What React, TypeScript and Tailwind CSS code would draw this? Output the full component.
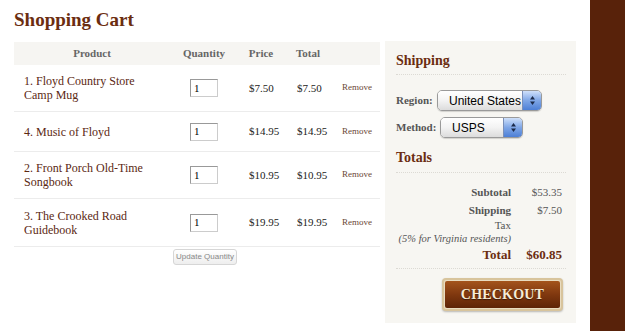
import React from "react";

const serif = { fontFamily: '"Liberation Serif", "Times New Roman", serif' };
const sans = { fontFamily: '"Liberation Sans", Arial, sans-serif' };

type Item = { name: string[]; price: string; h: string };
const items: Item[] = [
  { name: ["1. Floyd Country Store", "Camp Mug"], price: "$7.50", h: "h-[47px]" },
  { name: ["4. Music of Floyd"], price: "$14.95", h: "h-[40px]" },
  { name: ["2. Front Porch Old-Time", "Songbook"], price: "$10.95", h: "h-[47px]" },
  { name: ["3. The Crooked Road", "Guidebook"], price: "$19.95", h: "h-[48px]" },
];

function Arrows() {
  return (
    <svg width="7" height="11" viewBox="0 0 7 11">
      <path d="M3.5 1 L6 4.5 H1 Z" fill="#1b2a4a" />
      <path d="M3.5 10 L6 6.5 H1 Z" fill="#1b2a4a" />
    </svg>
  );
}

function Select({ label, w }: { label: string; w: string }) {
  return (
    <div
      className={`flex h-[21px] ${w} overflow-hidden rounded-[5px] border border-[#9a9a9a] shadow-[0_1px_1px_rgba(0,0,0,0.15)]`}
    >
      <div
        className="flex flex-1 items-center bg-gradient-to-b from-[#ffffff] via-[#f3f3f3] to-[#dcdcdc] pl-[11px] text-[12px] text-black"
        style={sans}
      >
        {label}
      </div>
      <div className="flex w-[19px] items-center justify-center border-l border-[#7a8fb8] bg-gradient-to-b from-[#cfe0fa] via-[#7fa6e6] to-[#4d7fd6]">
        <Arrows />
      </div>
    </div>
  );
}

export default function App() {
  return (
    <div className="flex h-[331px] w-[625px] overflow-hidden bg-white" style={serif}>
      <div className="flex flex-1 flex-col pl-[14px]">
        <h1 className="mt-[9px] h-[32px] shrink-0 text-[19px] font-bold leading-[22px] text-[#6b2d10]">
          Shopping Cart
        </h1>
        <div className="flex shrink-0 gap-[5px]">
          {/* Cart table */}
          <div className="flex w-[366px] flex-col">
            <div className="mt-[1px] flex h-[23px] items-center bg-[#f6f5f2] text-[11px] font-bold text-[#666]">
              <div className="w-[156px] text-center">Product</div>
              <div className="w-[68px] text-center">Quantity</div>
              <div className="w-[46px] text-center">Price</div>
              <div className="w-[48px] text-center">Total</div>
              <div className="w-[48px]" />
            </div>
            {items.map((it, i) => (
              <div
                key={i}
                className={`flex ${it.h} items-center border-b border-[#ececec]`}
              >
                <div className="w-[156px] pl-[10px] text-[12px] leading-[14px] text-[#5b2812]">
                  {it.name.map((n, j) => (
                    <div key={j}>{n}</div>
                  ))}
                </div>
                <div className="flex w-[68px] justify-center">
                  <div
                    className="flex h-[18px] w-[28px] items-center border border-[#999] border-b-[#ccc] border-r-[#ccc] bg-white pl-[3px] text-[11px] text-black"
                    style={serif}
                  >
                    1
                  </div>
                </div>
                <div className="w-[46px] pl-[11px] text-[11px] text-[#222]">{it.price}</div>
                <div className="w-[48px] pl-[13px] text-[11px] text-[#222]">{it.price}</div>
                <div className="w-[48px] pl-[10px] text-[9px] text-[#6a4636]">Remove</div>
              </div>
            ))}
            <div className="flex justify-center pl-[16px]">
              <div
                className="mt-[2px] flex h-[16px] w-[64px] items-center justify-center rounded-[3px] border border-[#d6d6d6] bg-gradient-to-b from-[#ffffff] to-[#eeeeee] text-[8px] text-[#888]"
                style={sans}
              >
                Update Quantity
              </div>
            </div>
          </div>

          {/* Right panel */}
          <div className="flex h-[282px] w-[191px] flex-col bg-[#f7f6f2] pl-[11px] pr-[10px]">
            <h2 className="mt-[12px] text-[14px] font-bold leading-[16px] text-[#6b2d10]">Shipping</h2>
            <div className="mt-[5px] border-b border-dotted border-[#dcdad4]" />
            <div className="mt-[15px] flex items-center">
              <span className="w-[41px] text-[11px] font-bold text-[#555]">Region:</span>
              <Select label="United States" w="w-[105px]" />
            </div>
            <div className="mt-[6px] flex items-center">
              <span className="w-[44px] text-[11px] font-bold text-[#555]">Method:</span>
              <Select label="USPS" w="w-[83px]" />
            </div>
            <h2 className="mt-[12px] text-[14px] font-bold leading-[16px] text-[#6b2d10]">Totals</h2>
            <div className="mt-[6px] border-b border-dotted border-[#dcdad4]" />
            <div className="mt-[10px] flex flex-col text-[11px]">
              <div className="flex h-[18px] items-center">
                <span className="w-[115px] text-right font-bold text-[#555]">Subtotal</span>
                <span className="w-[51px] text-right text-[#555]">$53.35</span>
              </div>
              <div className="flex h-[18px] items-center">
                <span className="w-[115px] text-right font-bold text-[#555]">Shipping</span>
                <span className="w-[51px] text-right text-[#555]">$7.50</span>
              </div>
              <div className="flex flex-col">
                <span className="w-[115px] text-right leading-[13px] text-[#555]">Tax</span>
                <span className="w-[115px] whitespace-nowrap text-right text-[10.5px] italic leading-[13px] text-[#555]">
                  (5% for Virginia residents)
                </span>
              </div>
              <div className="mt-[1px] flex h-[18px] items-center text-[13px] font-bold text-[#6b2d10]">
                <span className="w-[115px] text-right">Total</span>
                <span className="w-[51px] text-right">$60.85</span>
              </div>
            </div>
            <div className="mt-[4px] border-b border-dotted border-[#dcdad4]" />
            <div className="mt-[9px] flex justify-end pr-[3px]">
              <div className="flex h-[33px] w-[121px] rounded-[4px] border-[2px] border-[#d8c49c] bg-[#e9dcc0] p-[1px] shadow-[0_1px_2px_rgba(0,0,0,0.25)]">
                <div className="flex flex-1 items-center justify-center rounded-[2px] bg-gradient-to-b from-[#a4541c] via-[#80380f] to-[#5e2407] text-[14px] font-bold tracking-[0.2px] text-[#f6ecd6] [text-shadow:0_1px_1px_rgba(0,0,0,0.5)]">
                  CHECKOUT
                </div>
              </div>
            </div>
          </div>
        </div>
      </div>
      <div className="ml-[14px] w-[35px] shrink-0 bg-[#58220a]" />
    </div>
  );
}
